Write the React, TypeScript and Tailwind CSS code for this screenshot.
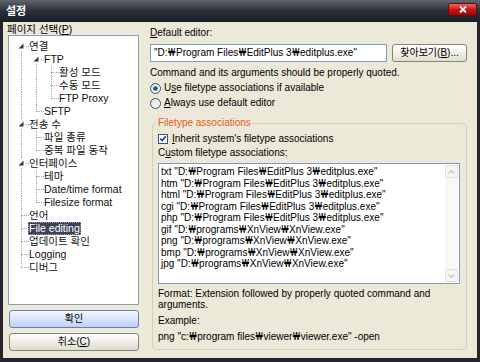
import React from 'react';

type Node = { label: string; level: number; expanded?: boolean; selected?: boolean };

const tree: Node[] = [
  { label: '연결', level: 0, expanded: true },
  { label: 'FTP', level: 1, expanded: true },
  { label: '활성 모드', level: 2 },
  { label: '수동 모드', level: 2 },
  { label: 'FTP Proxy', level: 2 },
  { label: 'SFTP', level: 1 },
  { label: '전송 수', level: 0, expanded: true },
  { label: '파일 종류', level: 1 },
  { label: '중복 파일 동작', level: 1 },
  { label: '인터페이스', level: 0, expanded: true },
  { label: '테마', level: 1 },
  { label: 'Date/time format', level: 1 },
  { label: 'Filesize format', level: 1 },
  { label: '언어', level: 0 },
  { label: 'File editing', level: 0, selected: true },
  { label: '업데이트 확인', level: 0 },
  { label: 'Logging', level: 0 },
  { label: '디버그', level: 0 },
];

function hasNext(i: number) {
  const L = tree[i].level;
  for (let j = i + 1; j < tree.length; j++) {
    if (tree[j].level < L) return false;
    if (tree[j].level === L) return true;
  }
  return false;
}

function ancestorHasNext(i: number, k: number) {
  for (let j = i - 1; j >= 0; j--) if (tree[j].level === k) return hasNext(j);
  return false;
}

const lineProps = { stroke: '#a3a3a3', strokeWidth: 1, strokeDasharray: '1 1', shapeRendering: 'crispEdges' as const };

function TreeRow({ node, i }: { node: Node; i: number }) {
  return (
    <div className="flex h-[13px] items-center">
      {Array.from({ length: node.level }).map((_, k) => (
        <svg key={k} width={15} height={13} className="shrink-0">
          {ancestorHasNext(i, k) && <line x1={6.5} y1={0} x2={6.5} y2={13} {...lineProps} />}
        </svg>
      ))}
      <svg width={15} height={13} className="shrink-0">
        {i > 0 && <line x1={6.5} y1={0} x2={6.5} y2={6.5} {...lineProps} />}
        {hasNext(i) && <line x1={6.5} y1={6.5} x2={6.5} y2={13} {...lineProps} />}
        <line x1={6.5} y1={6.5} x2={15} y2={6.5} {...lineProps} />
        {node.expanded && (
          <>
            <rect x={2} y={2} width={8} height={9} fill="#ffffff" />
            <polygon points="8.5,3.5 8.5,8.5 3.5,8.5" fill="#3a3a3a" />
          </>
        )}
      </svg>
      <span
        className={
          node.selected
            ? '-ml-[2px] px-[1px] h-[13px] leading-[12px] bg-[#3c4457] text-white outline outline-1 outline-dotted outline-[#9aa0ad] -outline-offset-1 whitespace-nowrap'
            : '-ml-[1px] h-[13px] leading-[13px] text-[#111] whitespace-nowrap'
        }
      >
        {node.label}
      </span>
    </div>
  );
}

function Won({ text }: { text: string }) {
  const parts = text.split('₩');
  return (
    <>
      {parts.map((p, i) => (
        <React.Fragment key={i}>
          {i > 0 && <span className="font-['Roboto','Noto_Sans',sans-serif] mx-[0.5px]">₩</span>}
          {p}
        </React.Fragment>
      ))}
    </>
  );
}

const cmdLines = [
  'txt "D:₩Program Files₩EditPlus 3₩editplus.exe"',
  'htm "D:₩Program Files₩EditPlus 3₩editplus.exe"',
  'html "D:₩Program Files₩EditPlus 3₩editplus.exe"',
  'cgi "D:₩Program Files₩EditPlus 3₩editplus.exe"',
  'php "D:₩Program Files₩EditPlus 3₩editplus.exe"',
  'gif "D:₩programs₩XnView₩XnView.exe"',
  'png "D:₩programs₩XnView₩XnView.exe"',
  'bmp "D:₩programs₩XnView₩XnView.exe"',
  'jpg "D:₩programs₩XnView₩XnView.exe"',
];

function Radio({ checked }: { checked?: boolean }) {
  return (
    <svg width={11} height={11} className="shrink-0">
      <defs>
        <linearGradient id={checked ? 'rg1' : 'rg2'} x1="0" y1="0" x2="1" y2="1">
          <stop offset="0" stopColor="#dcdcd5" />
          <stop offset="1" stopColor="#ffffff" />
        </linearGradient>
      </defs>
      <circle cx={5.5} cy={5.5} r={5} fill={`url(#${checked ? 'rg1' : 'rg2'})`} stroke="#32527e" strokeWidth={1} />
      {checked && <circle cx={5.5} cy={5.5} r={2.3} fill="#2a4f8e" />}
    </svg>
  );
}

export default function App() {
  return (
    <div className="w-[480px] h-[362px] flex flex-col bg-[#23262e] font-['Liberation_Sans','DejaVu_Sans','Noto_Sans_CJK_KR',sans-serif] text-[10px] text-black overflow-hidden">
      {/* Title bar */}
      <div className="h-[22px] shrink-0 flex items-start bg-gradient-to-b from-[#60656f] via-[#2c3039] to-[#1b1d24]">
        <div className="ml-[6px] mt-[3px] text-white font-bold text-[11px] leading-[14px] font-['Noto_Sans_CJK_KR',sans-serif]">설정</div>
        <div className="ml-auto mr-[3px] mt-[3px] w-[29px] h-[13px] rounded-[2px] border border-[#5e0b0b] bg-gradient-to-b from-[#f0625a] via-[#c81414] to-[#a00a0a] flex items-center justify-center">
          <svg width={8} height={7}>
            <path d="M1 0.5 L7 6.5 M7 0.5 L1 6.5" stroke="#ffffff" strokeWidth={1.8} />
          </svg>
        </div>
      </div>

      {/* Body */}
      <div className="mx-[3px] h-[336px] bg-[#ece9d8] flex">
        {/* Left column */}
        <div className="w-[136px] pl-[5px] pt-[1px] flex flex-col">
          <div className="h-[12px] leading-[12px] -ml-[1px] whitespace-nowrap text-[10.5px]">
            페이지 선택(<span className="underline">P</span>)
          </div>
          <div className="w-[131px] h-[270px] border border-[#8c9db4] bg-white pt-[4px] pl-[6px] text-[10.5px]">
            {tree.map((n, i) => (
              <TreeRow key={i} node={n} i={i} />
            ))}
          </div>
          <div className="mt-[5px] w-[130px] ml-[1px] h-[18px] rounded-[3px] border border-[#6a7fae] bg-gradient-to-b from-[#f4f7fe] to-[#bfd0f5] flex items-center justify-center leading-[12px]">
            확인
          </div>
          <div className="mt-[5px] w-[130px] ml-[1px] h-[18px] rounded-[3px] border border-[#85847c] bg-gradient-to-b from-[#ffffff] to-[#dedbcf] flex items-center justify-center leading-[12px]">
            취소(<span className="underline">C</span>)
          </div>
        </div>

        {/* Right column */}
        <div className="ml-[11px] w-[317px] pt-[5px] flex flex-col">
          <div className="h-[12px] leading-[12px]">
            <span className="underline">D</span>efault editor:
          </div>
          <div className="mt-[5px] flex h-[18px]">
            <div className="w-[237px] h-[18px] border border-[#7f9db9] bg-white pl-[3px] leading-[16px] whitespace-nowrap overflow-hidden">
              <Won text={'"D:₩Program Files₩EditPlus 3₩editplus.exe"'} />
            </div>
            <div className="ml-[5px] w-[75px] h-[18px] rounded-[3px] border border-[#85847c] bg-gradient-to-b from-[#ffffff] to-[#e2dfd3] flex items-center justify-center leading-[12px] whitespace-nowrap">
              찾아보기(<span className="underline">B</span>)...
            </div>
          </div>
          <div className="mt-[5px] h-[12px] leading-[12px] whitespace-nowrap">
            Command and its arguments should be properly quoted.
          </div>
          <div className="mt-[3px] h-[12px] flex items-center gap-[3px] leading-[12px] whitespace-nowrap">
            <Radio checked />
            <span>
              U<span className="underline">s</span>e filetype associations if available
            </span>
          </div>
          <div className="mt-[3px] h-[12px] flex items-center gap-[3px] leading-[12px] whitespace-nowrap">
            <Radio />
            <span>
              <span className="underline">A</span>lways use default editor
            </span>
          </div>

          {/* Group box */}
          <div className="relative mt-[14px] ml-[2px] w-[315px] h-[227px] border border-[#d0d0bf] rounded-[4px] pl-[5px] pt-[9px] flex flex-col">
            <div className="absolute -top-[7px] left-[4px] px-[1px] bg-[#ece9d8] text-[#e2601a] leading-[12px] whitespace-nowrap">
              Filetype associations
            </div>
            <div className="h-[12px] flex items-center gap-[4px] leading-[12px] whitespace-nowrap">
              <svg width={10} height={10} className="shrink-0">
                <rect x={0.5} y={0.5} width={9} height={9} fill="#ffffff" stroke="#32527e" />
                <path d="M2.3 4.6 L4.2 6.6 L7.8 2.2" stroke="#223c8e" strokeWidth={1.6} fill="none" />
              </svg>
              <span>
                <span className="underline">I</span>nherit system's filetype associations
              </span>
            </div>
            <div className="mt-[2px] h-[12px] leading-[12px] whitespace-nowrap">
              C<span className="underline">u</span>stom filetype associations:
            </div>
            <div className="mt-[4px] w-[302px] h-[121px] border border-[#7f9db9] bg-white flex">
              <div className="flex-1 pl-[2px] pt-[2px] leading-[11.5px] whitespace-nowrap overflow-hidden">
                {cmdLines.map((l, i) => (
                  <div key={i}>
                    <Won text={l} />
                  </div>
                ))}
              </div>
              <div className="w-[13px] mr-[1px] my-[1px] flex flex-col justify-between bg-[#f8f8f5]">
                <div className="h-[13px] rounded-[2px] border border-[#e3e3dc] bg-[#f6f6f2] flex items-center justify-center">
                  <svg width={7} height={4}>
                    <path d="M0.5 3.5 L3.5 0.8 L6.5 3.5" stroke="#c4c4bc" strokeWidth={1.2} fill="none" />
                  </svg>
                </div>
                <div className="h-[13px] rounded-[2px] border border-[#e3e3dc] bg-[#f6f6f2] flex items-center justify-center">
                  <svg width={7} height={4}>
                    <path d="M0.5 0.5 L3.5 3.2 L6.5 0.5" stroke="#c4c4bc" strokeWidth={1.2} fill="none" />
                  </svg>
                </div>
              </div>
            </div>
            <div className="mt-[4px] leading-[11px] w-[300px]">
              Format: Extension followed by properly quoted command and arguments.
            </div>
            <div className="mt-[5px] h-[12px] leading-[12px]">Example:</div>
            <div className="mt-[4px] h-[12px] leading-[12px] whitespace-nowrap">
              <Won text={'png "c:₩program files₩viewer₩viewer.exe" -open'} />
            </div>
          </div>
        </div>
      </div>
    </div>
  );
}
